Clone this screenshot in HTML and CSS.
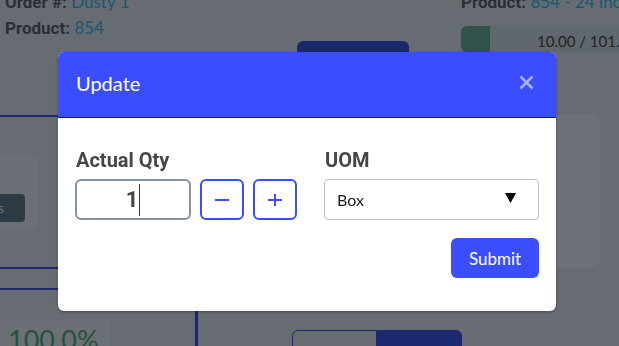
FILE: index.html
```html
<!DOCTYPE html>
<html lang="en">
<head>
    <meta charset="UTF-8">
    <meta name="viewport" content="width=device-width, initial-scale=1.0">
    <title>Order - Update</title>
    <link rel="stylesheet" href="styles.css">
</head>
<body>
    <div class="page">
        <div class="top">
            <div class="info">
                <p><b>Order #:</b> <span class="val">Dusty 1</span></p>
                <p><b>Product:</b> <span class="val">854</span></p>
            </div>
            <button class="start-btn">Start</button>
            <div class="product">
                <p><b>Product:</b> <span class="val">854 - 24 inch</span></p>
                <div class="progress">
                    <div class="progress-fill" style="width: 12%"></div>
                    <span class="progress-text">10.00 / 101.00</span>
                </div>
            </div>
        </div>
        <div class="middle">
            <div class="panel">
                <div class="panel-card">
                    <button class="slate-btn">Items</button>
                </div>
            </div>
            <div></div>
            <div class="side-card"></div>
        </div>
        <div class="bottom">
            <div class="stats">
                <div class="stat-card">100.0%</div>
            </div>
            <div class="toggle">
                <button class="toggle-btn">Record</button>
                <button class="toggle-btn on">Target</button>
            </div>
        </div>
    </div>

    <div class="backdrop"></div>

    <div class="modal">
        <div class="modal-head">
            <span class="modal-title">Update</span>
            <svg class="close" width="15" height="15" viewBox="0 0 15 15">
                <path d="M1.5 1.5 L13.5 13.5 M13.5 1.5 L1.5 13.5" />
            </svg>
        </div>
        <div class="modal-body">
            <div class="field">
                <label>Actual Qty</label>
                <div class="qty-row">
                    <div class="qty-input"><span>1</span><span class="caret"></span></div>
                    <button class="step-btn">
                        <svg width="14" height="14" viewBox="0 0 14 14"><path d="M0 7 H14" /></svg>
                    </button>
                    <button class="step-btn">
                        <svg width="14" height="14" viewBox="0 0 14 14"><path d="M0 7 H14 M7 1 V13" /></svg>
                    </button>
                </div>
            </div>
            <div class="field">
                <label>UOM</label>
                <div class="select">
                    <span>Box</span>
                    <svg width="11" height="10" viewBox="0 0 11 10"><path d="M0 0 H11 L5.5 10 Z" /></svg>
                </div>
            </div>
            <button class="submit">Submit</button>
        </div>
    </div>
</body>
</html>
```

FILE: styles.css
```css
body {
    margin: 0;
    padding: 0;
    width: 619px;
    height: 346px;
    overflow: hidden;
    background-color: #ced8e6;
    font-family: "Lato", "Liberation Sans", sans-serif;
    color: #545e6a;
}
p {
    margin: 0;
}
b {
    font-family: Roboto, sans-serif;
    font-weight: bold;
}
button {
    font-family: inherit;
}
.page {
    margin-top: -11px;
}
.val {
    color: #36aedc;
}
/* top row */
.top {
    display: grid;
    grid-template-columns: 297px 112px 1fr;
    height: 126px;
}
.info {
    padding-left: 5px;
    font-size: 17px;
    line-height: 25px;
}
.start-btn {
    margin-top: 52px;
    height: 40px;
    background-color: #3650e0;
    border: none;
    border-radius: 6px;
}
.product {
    padding-left: 52px;
    font-size: 17px;
    line-height: 25px;
}
.progress {
    position: relative;
    display: flex;
    margin-top: 11px;
    height: 26px;
    width: 240px;
    background-color: #c2cfdc;
    border-radius: 6px;
    overflow: hidden;
}
.progress-fill {
    background-color: #62a494;
}
.progress-text {
    position: absolute;
    left: 76px;
    top: 3px;
    font-size: 15px;
    color: #444;
}
/* middle row */
.middle {
    display: grid;
    grid-template-columns: 198px 347px 55px;
}
.panel {
    height: 150px;
    border-top: 2px solid #3650e0;
    border-bottom: 2px solid #3650e0;
    overflow: hidden;
}
.panel-card {
    display: flex;
    justify-content: flex-end;
    margin: 38px 0 0 -140px;
    width: 178px;
    height: 73px;
    background-color: #d4e0ec;
    border-radius: 4px;
}
.slate-btn {
    margin: 39px 13px 0 0;
    height: 28px;
    padding: 0 21px;
    background-color: #5c7488;
    color: #dde5ee;
    border: none;
    border-radius: 4px;
    font-size: 13px;
}
.side-card {
    height: 153px;
    background-color: #d6e2ee;
    border-radius: 8px;
}
/* bottom row */
.bottom {
    display: grid;
    grid-template-columns: 198px 1fr;
    margin-top: 19px;
}
.stats {
    height: 80px;
    border-top: 2px solid #3650e0;
    border-right: 3px solid #3650e0;
}
.stat-card {
    margin-top: 30px;
    width: 103px;
    height: 60px;
    padding: 3px 0 0 8px;
    background-color: #d6e0ec;
    border-radius: 4px;
    font-size: 27px;
    color: #4aa472;
}
.toggle {
    display: flex;
    margin: 42px 0 0 94px;
}
.toggle-btn {
    width: 85px;
    height: 36px;
    padding-top: 8px;
    border: 1px solid #3650e0;
    background: transparent;
    color: #3650e0;
    font-size: 16px;
    border-radius: 6px 0 0 6px;
}
.toggle-btn.on {
    background-color: #3650e0;
    color: #e8ecff;
    border-radius: 0 6px 6px 0;
}
/* modal */
.backdrop {
    position: fixed;
    inset: 0;
    background-color: rgba(0, 0, 0, 0.5);
}
.modal {
    position: fixed;
    left: 58px;
    top: 52px;
    width: 498px;
    height: 259px;
    background-color: #FFF;
    border-radius: 6px;
    overflow: hidden;
    box-shadow: 0 1px 3px rgba(0, 0, 0, 0.3);
}
.modal-head {
    display: flex;
    align-items: center;
    justify-content: space-between;
    height: 61px;
    padding: 0 22px 4px 18px;
    background-color: #3a4dff;
    border-bottom: 1px solid #16233f;
}
.modal-title {
    font-size: 20px;
    color: #FFF;
}
.close path {
    stroke: #a9b1ff;
    stroke-width: 2.5;
}
.modal-body {
    display: grid;
    grid-template-columns: 249px 1fr;
    padding: 31px 17px 0 17px;
}
.field label {
    display: block;
    padding-left: 1px;
    font-family: Roboto, sans-serif;
    font-size: 20px;
    line-height: 23px;
    font-weight: bold;
    color: #45474b;
}
.qty-row {
    display: flex;
    gap: 9px;
    margin-top: 7px;
}
.qty-input {
    display: flex;
    align-items: center;
    justify-content: center;
    width: 112px;
    height: 37px;
    border: 2px solid #8593a0;
    border-radius: 6px;
    font-family: Roboto, sans-serif;
    font-size: 22px;
    font-weight: bold;
    color: #444;
}
.caret {
    width: 1px;
    height: 32px;
    margin-left: 1px;
    background-color: #333;
}
.step-btn {
    display: flex;
    align-items: center;
    justify-content: center;
    width: 44px;
    height: 41px;
    padding: 0;
    background-color: #FFF;
    border: 2px solid #3a4dff;
    border-radius: 6px;
}
.step-btn path {
    stroke: #3a4dff;
    stroke-width: 2;
}
.select {
    display: flex;
    align-items: center;
    justify-content: space-between;
    margin-top: 7px;
    height: 39px;
    padding: 0 22px 0 12px;
    border: 1px solid #bdbdbd;
    border-radius: 4px;
    font-size: 16px;
    color: #222;
}
.select svg {
    margin-top: -4px;
}
.submit {
    grid-column: 2;
    justify-self: end;
    margin-top: 18px;
    width: 88px;
    height: 40px;
    background-color: #3a4dff;
    color: #FFF;
    border: none;
    border-radius: 6px;
    font-size: 17px;
}
```
